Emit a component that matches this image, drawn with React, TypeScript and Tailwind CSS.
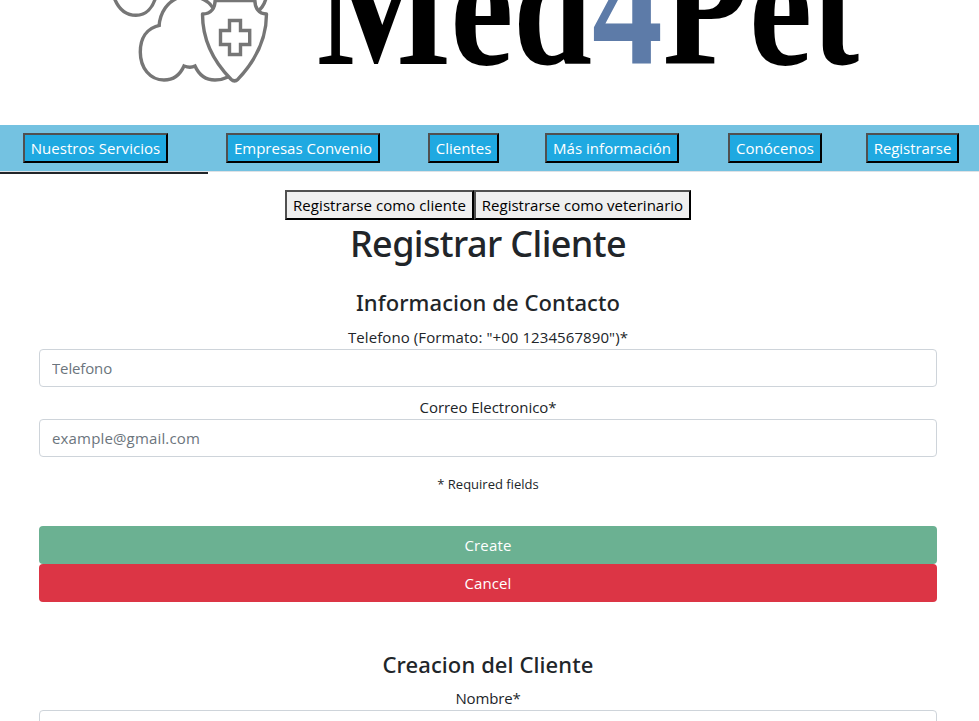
import type { ReactNode } from "react";

function Logo() {
  return (
    <svg className="block h-[125px] w-full" viewBox="0 0 979 125" role="img" aria-label="Med4Pet">
      <g fill="none" stroke="#767676" strokeWidth="3.4">
        <path d="M113.500 -4C118 9 126 15.300 136 15.300C146 15.300 153 8 156 -4" />
        <path d="M240 -24C256 -20 268 -12 265.500 0C264 5 261 9 257 12" />
        <path d="M159 26.500C160 12 168 1 180 -3C193 -6 207 -2 213 8" />
        <path d="M160.500 25.200C146 28 140.300 39 140.300 52C140.300 68 150 80 164 80C173 80 180 75 184 66C188 67.500 192 67.500 195 66C199 75 206 80 215 80C220 80 224 79 228 77" />
        <path
          fill="#fff"
          strokeLinejoin="round"
          d="M215 -2C216 8 211 14 202.500 14C202.500 37 210 58 231 79.200Q234.500 82.500 238 79.200C258 58 266.500 37 266.500 14C259 14 254 8 255 -2"
        />
        <path d="M214 0.500H256" />
        <path d="M229.500 20.500H240.500V30.500H249.700V44.500H240.500V54.500H229.500V44.500H220.500V30.500H229.500Z" />
      </g>
      <text
        transform="translate(317 63.700) scale(0.818 1)"
        className="font-['Liberation_Serif',serif] text-[173px] font-bold"
      >
        Med<tspan fill="#5d7ba8">4</tspan>Pet
      </text>
    </svg>
  );
}

const bevel = "h-[30px] shrink-0 whitespace-nowrap border-2 border-t-[#505050] border-l-[#505050] border-r-black border-b-black text-center leading-[26px]";

function NavButton({ className, children }: { className: string; children: ReactNode }) {
  return <button className={`${bevel} bg-[#1fa9e1] text-white ${className}`}>{children}</button>;
}

const label = "h-6 leading-6";
const field =
  "block h-[38px] w-full rounded-[4px] border border-[#ced4da] bg-white px-3 outline-none placeholder:text-[#6c757d]";
const heading = "font-['Noto_Sans',sans-serif] text-[22px] font-medium leading-[29px]";

export default function App() {
  return (
    <div className="h-[721px] overflow-hidden bg-white font-['Open_Sans',sans-serif] text-[15px] text-[#212529]">
      <Logo />
      <nav className="flex h-[47px] border-b border-[#dee2e6] bg-[#74c2e1] pt-2 pl-[23px]">
        <NavButton className="w-[145px] tracking-[0.04px]">Nuestros Servicios</NavButton>
        <NavButton className="ml-[58px] w-[154px]">Empresas Convenio</NavButton>
        <NavButton className="ml-12 w-[71px]">Clientes</NavButton>
        <NavButton className="ml-[46px] w-[134px] tracking-[0.03px]">Más información</NavButton>
        <NavButton className="ml-[49px] w-[94px] tracking-[0.03px]">Conócenos</NavButton>
        <NavButton className="ml-11 w-[93px] tracking-[-0.07px]">Registrarse</NavButton>
      </nav>
      <div className="h-[2px] w-[208px] bg-[#212529]" />

      <main className="pt-4 pr-[42px] pl-[39px] text-center">
        <div className="flex justify-center">
          <button className={`${bevel} w-[189px] bg-[#efefef] tracking-[0.07px] text-black`}>Registrarse como cliente</button>
          <button className={`${bevel} w-[217px] bg-[#efefef] text-black`}>Registrarse como veterinario</button>
        </div>
        <h1 className="h-12 font-['Noto_Sans',sans-serif] text-[36px] leading-[48px] font-medium tracking-[-0.61px]">
          Registrar Cliente
        </h1>

        <h2 className={`${heading} mt-5 tracking-[0.08px]`}>Informacion de Contacto</h2>
        <div className="mt-2">
          <div className={`${label} tracking-[0.085px]`}>Telefono (Formato: "+00 1234567890")*</div>
          <input className={`${field} tracking-[-0.14px]`} placeholder="Telefono" />
        </div>
        <div className="mt-2">
          <div className={`${label} tracking-[-0.04px]`}>Correo Electronico*</div>
          <input className={`${field} tracking-[0.16px]`} placeholder="example@gmail.com" />
        </div>
        <p className="mt-4 h-[22px] text-[13px] leading-[22px]">* Required fields</p>

        <div className="mt-[31px]">
          <button className="block h-[38px] w-full rounded-[4px] bg-[#6bb192] tracking-[0.15px] text-white">Create</button>
          <button className="block h-[38px] w-full rounded-[4px] bg-[#dc3545] tracking-[0.1px] text-white">Cancel</button>
        </div>

        <h2 className={`${heading} mt-12 tracking-[0.1px]`}>Creacion del Cliente</h2>
        <div className="mt-[7px]">
          <div className={`${label} tracking-[-0.17px]`}>Nombre*</div>
          <input className={field} />
        </div>
      </main>
    </div>
  );
}
